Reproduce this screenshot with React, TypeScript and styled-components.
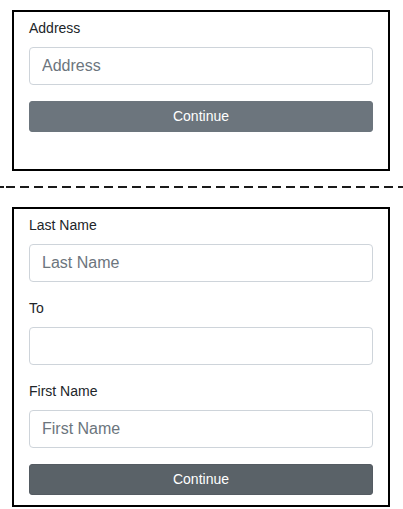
import React from "react";
import styled, { createGlobalStyle } from "styled-components";

const GlobalStyle = createGlobalStyle`
  * { box-sizing: border-box; }
  html, body { margin: 0; padding: 0; background: #ffffff; }
  body {
    font-family: "Liberation Sans", Arial, sans-serif;
    font-size: 14px;
    color: #212529;
  }
`;

const Page = styled.div`
  width: 403px;
  padding-top: 10px;
  display: flex;
  flex-direction: column;
`;

const Panel = styled.form<{ $bottomPad: number }>`
  margin-left: 12px;
  width: 378px;
  border: 2px solid #000000;
  padding: 6px 15px ${(p) => p.$bottomPad}px 15px;
  display: flex;
  flex-direction: column;
  background: #ffffff;
`;

const Divider = styled.div`
  height: 2px;
  margin: 15px 0 19px 0;
  background-image: repeating-linear-gradient(
    to right,
    #1a1a1a 0px,
    #1a1a1a 9px,
    transparent 9px,
    transparent 14px
  );
  background-position: 6px 0;
`;

const Group = styled.div`
  display: flex;
  flex-direction: column;
  margin-bottom: 16px;
`;

const Label = styled.label`
  font-size: 14px;
  line-height: 21px;
  margin-bottom: 8px;
  color: #212529;
`;

const Input = styled.input`
  height: 38px;
  width: 100%;
  padding: 6px 12px;
  font-family: "Liberation Sans", Arial, sans-serif;
  font-size: 16px;
  line-height: 24px;
  color: #495057;
  background: #ffffff;
  border: 1px solid #ced4da;
  border-radius: 4px;
  outline: none;
  &::placeholder {
    color: #6c757d;
    opacity: 1;
  }
`;

const Button = styled.button<{ $dark?: boolean }>`
  height: 31px;
  width: 100%;
  border: 1px solid ${(p) => (p.$dark ? "#545b62" : "#6c757d")};
  border-radius: 3px;
  background: ${(p) => (p.$dark ? "#5a6268" : "#6c757d")};
  color: #ffffff;
  font-family: "Liberation Sans", Arial, sans-serif;
  font-size: 14px;
  line-height: 21px;
  padding: 4px 8px;
  cursor: pointer;
`;

type FieldProps = { label: string; placeholder: string };

const Field = ({ label, placeholder }: FieldProps) => (
  <Group>
    <Label>{label}</Label>
    <Input placeholder={placeholder} />
  </Group>
);

export default function App() {
  return (
    <>
      <GlobalStyle />
      <Page>
        <Panel $bottomPad={37} onSubmit={(e) => e.preventDefault()}>
          <Field label="Address" placeholder="Address" />
          <Button type="submit">Continue</Button>
        </Panel>
        <Divider />
        <Panel $bottomPad={10} onSubmit={(e) => e.preventDefault()}>
          <Field label="Last Name" placeholder="Last Name" />
          <Field label="To" placeholder="" />
          <Field label="First Name" placeholder="First Name" />
          <Button type="submit" $dark>
            Continue
          </Button>
        </Panel>
      </Page>
    </>
  );
}
